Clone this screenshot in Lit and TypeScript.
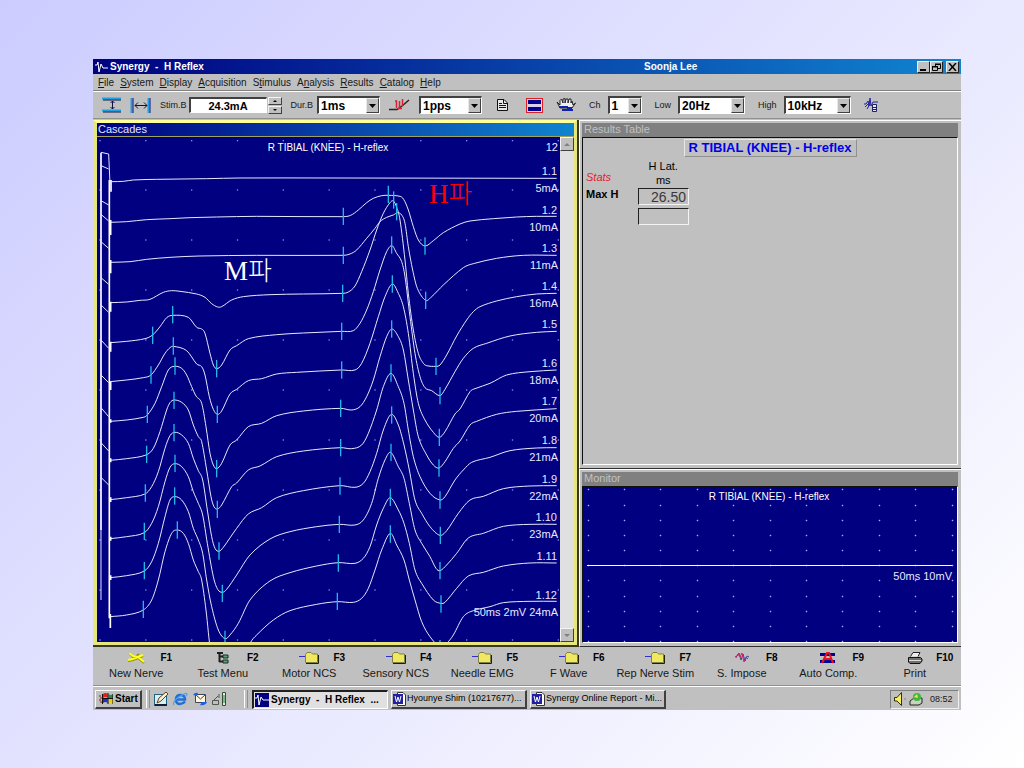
import { LitElement, html, svg, css } from "lit";
import { customElement, property } from "lit/decorators.js";
import { classMap } from "lit/directives/class-map.js";

type Pt = [number, number];

interface Trace {
  name: string;
  current: string;
  base: number;
  points: number[];
  cursors: number[];
}

/* Sample units are thirds of a pixel. */
const TRACES: Trace[] = [
  { name: "1.1", current: "5mA", base: 175, cursors: [],
    points: [65,185,100,184,130,180,200,178,350,176,450,174,720,174,1400,175] },
  { name: "1.2", current: "10mA", base: 290, cursors: [760,289,895,223,1005,378],
    points: [60,307,110,305,170,299,240,296,300,293,380,291,500,289,760,290,782,286,805,270,830,248,850,235,875,227,895,226,930,229,941,238,955,270,970,320,985,360,1005,378,1030,362,1060,338,1110,312,1140,303,1210,296,1280,291,1340,289,1400,289] },
  { name: "1.3", current: "11mA", base: 406, cursors: [760,406,920,275,1007,541],
    points: [60,427,120,425,170,418,240,412,330,408,500,406,760,406,780,402,800,390,830,355,855,325,870,305,890,292,910,285,923,278,935,285,945,310,955,380,968,450,982,505,1007,541,1025,530,1060,495,1120,443,1150,431,1220,415,1300,406,1400,406] },
  { name: "1.4", current: "16mA", base: 520, cursors: [758,520,911,240,1038,739],
    points: [60,548,110,546,150,541,180,538,220,517,245,512,270,514,320,522,345,532,365,551,383,561,395,560,425,540,460,530,540,524,640,522,758,520,775,516,795,498,815,455,840,390,860,330,880,280,900,248,910,243,920,262,930,300,945,420,955,520,970,630,985,700,1000,730,1010,737,1038,739,1050,735,1070,705,1100,648,1130,600,1150,575,1170,560,1220,543,1280,530,1340,522,1400,520] },
  { name: "1.5", current: "", base: 634, cursors: [188,646,248,584,380,746,755,634,905,375,1050,827],
    points: [60,668,110,664,165,656,188,645,210,620,230,593,248,586,295,592,320,622,335,627,345,640,360,700,370,735,380,746,395,735,420,690,440,677,475,656,560,644,640,639,755,634,790,632,810,610,830,570,850,515,870,450,890,395,906,377,920,400,935,425,945,470,960,590,975,700,990,770,1005,803,1025,812,1050,827,1065,808,1095,755,1120,715,1150,685,1190,670,1260,648,1340,637,1400,634] },
  { name: "1.6", current: "18mA", base: 750, cursors: [183,765,250,678,382,883,755,750,907,492,1048,952],
    points: [60,785,110,780,160,773,183,765,205,735,225,700,240,683,250,679,290,692,320,732,335,740,345,765,358,830,370,868,382,883,395,873,420,822,440,808,475,782,515,776,560,762,620,757,755,750,795,750,815,730,840,670,865,590,885,530,907,492,925,520,940,560,955,640,970,760,985,850,1005,900,1030,937,1048,952,1065,935,1095,882,1110,867,1140,815,1155,806,1200,790,1250,765,1320,755,1400,750] },
  { name: "1.7", current: "20mA", base: 865, cursors: [172,883,255,738,380,1046,752,865,905,627,1047,1044],
    points: [60,904,110,900,160,892,172,885,195,850,215,800,235,750,253,739,275,745,290,765,305,800,318,828,335,850,348,920,360,1000,370,1035,380,1046,395,1030,420,975,440,960,475,920,515,910,560,887,640,873,752,865,785,870,810,860,830,830,850,780,870,710,890,650,906,627,925,650,940,690,955,780,970,870,985,950,1010,1005,1030,1035,1047,1044,1065,1025,1090,985,1110,963,1140,915,1160,904,1220,883,1280,874,1400,866] },
  { name: "1.8", current: "21mA", base: 982, cursors: [170,1003,252,841,382,1168,752,983,903,759,1050,1140],
    points: [60,1021,110,1016,168,1005,190,985,210,935,230,870,240,848,252,840,275,847,295,870,310,915,325,950,335,965,350,1050,363,1130,372,1160,382,1167,395,1155,425,1100,440,1089,475,1050,510,1038,560,1010,640,993,752,983,785,986,815,975,835,940,860,870,880,800,903,760,925,800,942,850,955,930,970,1010,990,1070,1020,1120,1050,1140,1065,1130,1095,1080,1120,1050,1145,1027,1200,1012,1260,992,1340,984,1400,983] },
  { name: "1.9", current: "22mA", base: 1097, cursors: [166,1119,252,938,387,1293,750,1098,905,885,1051,1246],
    points: [60,1139,110,1133,165,1122,185,1100,205,1055,225,985,240,947,255,937,275,945,295,970,310,1015,325,1052,338,1080,352,1170,365,1250,375,1285,387,1294,400,1282,440,1225,475,1182,515,1163,560,1133,640,1112,750,1097,795,1102,820,1090,840,1055,860,1000,880,930,904,883,925,915,942,975,958,1050,975,1140,995,1180,1020,1220,1050,1246,1070,1232,1105,1180,1140,1140,1180,1129,1240,1106,1320,1098,1400,1097] },
  { name: "1.10", current: "23mA", base: 1213, cursors: [163,1234,255,1030,397,1420,748,1213,903,997,1050,1352],
    points: [60,1256,110,1250,163,1238,185,1210,205,1160,225,1085,240,1042,255,1031,275,1040,295,1070,310,1115,325,1150,338,1185,352,1270,370,1370,383,1408,397,1417,410,1408,440,1365,480,1305,540,1257,600,1235,680,1220,748,1213,795,1215,820,1200,845,1150,865,1075,885,1020,902,997,925,1040,942,1075,958,1150,975,1230,995,1270,1020,1310,1038,1345,1050,1352,1070,1335,1100,1300,1135,1254,1180,1240,1240,1219,1320,1213,1400,1213] },
  { name: "1.11", current: "", base: 1329, cursors: [163,1352,254,1128,405,1558,745,1329,901,1132,1053,1452],
    points: [60,1373,110,1367,163,1353,185,1325,205,1270,225,1190,240,1140,255,1130,275,1140,295,1175,310,1225,325,1260,338,1300,350,1380,365,1460,385,1530,405,1556,420,1545,445,1510,480,1440,540,1383,600,1358,680,1338,745,1328,795,1330,820,1315,840,1280,860,1215,880,1165,901,1133,925,1170,942,1210,958,1270,975,1350,995,1390,1030,1440,1053,1450,1065,1447,1100,1405,1135,1368,1180,1357,1240,1338,1320,1329,1400,1329] },
  { name: "1.12", current: "50ms 2mV 24mA", base: 1445, cursors: [160,1468,262,1230,742,1444,901,1242,1050,1586],
    points: [60,1490,110,1485,160,1470,185,1440,205,1380,225,1295,245,1240,262,1230,280,1240,295,1270,310,1320,325,1355,335,1380,348,1470,362,1590,400,1680,440,1660,480,1570,500,1545,550,1500,600,1472,680,1453,742,1445,790,1447,815,1435,835,1405,855,1350,875,1290,901,1240,920,1275,942,1320,958,1380,975,1440,995,1505,1020,1550,1050,1580,1070,1570,1090,1545,1120,1490,1150,1472,1200,1460,1240,1448,1320,1444,1400,1444] },
];

/* Stimulus artefact strokes joining the two vertical edges. */
const ARTEFACTS: number[] = [97,102,137,147,242,255,283,303,365,385,473,493,555,577,660,685,765,788,863,890,968,993,1072,1095];

function smooth(flat: number[]): string {
  const p: Pt[] = pairs(flat);
  let d = `M${p[0][0]} ${p[0][1]}`;
  for (let i = 0; i < p.length - 1; i++) {
    const a = p[i], b = p[i + 1];
    const prev = p[i - 1] ?? a, next = p[i + 2] ?? b;
    const dx = (b[0] - a[0]) / 3;
    const slope = (q: Pt, r: Pt) => (r[1] - q[1]) / (r[0] - q[0] || 1);
    const s1 = slope(prev, b), s2 = slope(a, next);
    d += `C${(a[0] + dx).toFixed(1)} ${(a[1] + s1 * dx).toFixed(1)} ${(b[0] - dx).toFixed(1)} ${(b[1] - s2 * dx).toFixed(1)} ${b[0]} ${b[1]}`;
  }
  return d;
}

function pairs(flat: number[]): Pt[] {
  const out: Pt[] = [];
  for (let i = 0; i < flat.length; i += 2) out.push([flat[i], flat[i + 1]]);
  return out;
}

const range = (n: number) => Array.from({ length: n }, (_, i) => i);

const base = css`
  * { box-sizing: border-box; }
  button { font: inherit; color: inherit; margin: 0; padding: 0; border: 0; background: none; }
  svg { display: block; }
`;

@customElement("cascade-chart")
class CascadeChart extends LitElement {
  static styles = [base, css`
    :host { display: block; min-width: 0; min-height: 0; background: #000080; overflow: hidden; }
    .chart { width: 100%; height: 100%; }
    .trace { fill: none; stroke: #e8e8ff; stroke-width: 3; }
    .edge { fill: none; stroke: #fff; stroke-width: 5; }
    .cursor { stroke: #20b8e8; stroke-width: 4; }
    .dot { fill: #8888f0; }
    .label { font: 11px "Liberation Sans", sans-serif; fill: #e8e8ff; text-anchor: end; }
    .heading { font: 10px "Liberation Sans", sans-serif; fill: #fff; text-anchor: middle; }
    .note { font: 27px "Liberation Serif", "Noto Sans CJK KR", serif; fill: #fff; }
    .hangul { font: 300 26px "Noto Sans CJK KR", sans-serif; }
    .red { fill: #ff0000; }
  `];

  render() {
    return html`<svg class="chart" viewBox="97 137 463 505" role="img" aria-label="H reflex cascade">
      <g transform="translate(90 120) scale(0.33333)">
        ${range(11).map((c) => range(11).map((r) => svg`<rect class="dot" x=${28 + c * 137.5} y=${r === 0 ? 60 : 58 + r * 150} width="4" height="4"/>`))}
        ${TRACES.map((t) => svg`<path class="trace" d=${smooth(t.points)}/>`)}
        <path class="edge" d="M33 98V1230M58 180V1495"/>
        <path class="trace" d="M33 1230V1440M56 102L60 190"/>
        <path class="edge" d="M63 180V215M62 300v45M62 420v40M62 545v30M62 665v30M62 785v25M62 898v10M62 1015v12M62 1132v14M62 1250v12M62 1366v14M61 1482v42"/>
        ${pairs(ARTEFACTS).map(([a, b]) => svg`<path class="trace" d="M33 ${a}L56 ${b}"/>`)}
        ${TRACES.map((t) => pairs(t.cursors).map(([x, y]) => svg`<path class="cursor" d="M${x} ${y - 26}V${y + 26}"/>`))}
      </g>
      <text class="heading" x="328" y="151">R TIBIAL (KNEE) - H-reflex</text>
      <text class="label" x="558" y="151">12</text>
      ${TRACES.map((t) => {
        const y = Math.round(120 + t.base / 3);
        return svg`<text class="label" x="557" y=${y - 3}>${t.name}</text>
          <text class="label" x="558" y=${y + 14}>${t.current}</text>`;
      })}
      <text class="note" x="224" y="280">M<tspan class="hangul">파</tspan></text>
      <text class="note red" x="429" y="203">H<tspan class="hangul">파</tspan></text>
    </svg>`;
  }
}

@customElement("monitor-chart")
class MonitorChart extends LitElement {
  static styles = [base, css`
    :host { display: block; min-width: 0; min-height: 0; background: #000080; overflow: hidden; }
    .chart { width: 100%; height: 100%; }
    .dot { fill: #a8a8ff; }
    .halo { fill: #2828a0; }
    .line { stroke: #fff; stroke-width: 1; }
    .label { font: 11px "Liberation Sans", sans-serif; fill: #e8e8ff; text-anchor: end; }
    .heading { font: 10px "Liberation Sans", sans-serif; fill: #fff; text-anchor: middle; }
  `];

  render() {
    return html`<svg class="chart" viewBox="583 487 374 155" role="img" aria-label="Monitor">
      ${range(11).map((c) => range(11).map((r) => {
        const x = Math.round(587.5 + c * 36.4), y = Math.round(489.4 + r * 15.16);
        return svg`<path class="halo" d="M${x - 1} ${y}h3v1h-3ZM${x} ${y - 1}h1v3h-1Z"/><rect class="dot" x=${x} y=${y} width="1" height="1"/>`;
      }))}
      <path class="line" d="M587 565.5H952"/>
      <text class="heading" x="769" y="500">R TIBIAL (KNEE) - H-reflex</text>
      <text class="label" x="952" y="580">50ms 10mV</text>
    </svg>`;
  }
}

@customElement("drop-field")
class DropField extends LitElement {
  @property() label = "";
  @property() name = "";
  @property() value = "";
  @property() size = "m";

  static styles = [base, css`
    :host { display: block; }
    .field { display: flex; align-items: center; gap: 7px; }
    .tight { gap: 4px; }
    .box { display: grid; align-items: center; height: 18px; background: #fff; border: 1px solid #fff; border-top: 2px solid #404040; border-left: 2px solid #404040; }
    .s { width: 34px; }
    .m { width: 63px; }
    .l { width: 67px; }
    select { grid-area: 1 / 1; width: 100%; height: 15px; appearance: none; border: 0; margin: 0; padding: 0 0 0 2px; background: none; font: bold 12px "Liberation Sans", sans-serif; color: #000; border-radius: 0; outline: 0; }
    .arrow { grid-area: 1 / 1; justify-self: end; display: grid; place-items: center; width: 13px; height: 15px; background: #c0c0c0; border: 1px solid #e8e8e8; border-right-color: #404040; border-bottom-color: #404040; pointer-events: none; }
  `];

  render() {
    return html`<div class=${classMap({ field: true, tight: this.label === "Dur.B" })}>
      ${this.label ? html`<label for="pick">${this.label}</label>` : ""}
      <span class="box ${this.size}">
        <select id="pick" aria-label=${this.label || this.name}><option>${this.value}</option></select>
        <span class="arrow"><svg width="7" height="4"><path d="M0 0H7L3.500 4Z"/></svg></span>
      </span>
    </div>`;
  }
}

const folder = svg`<path d="M0 5.500H6" stroke="#3030d0"/><path d="M6.500 11.500V3.500L8 1.500H12L13.500 3H18.500V11.500Z" fill="#f0e860" stroke="#808040"/><path d="M7 12.500H19.500V4" fill="none" stroke="#202000"/>`;

const FUNCTIONS = [
  { key: "F1", text: "New Nerve", icon: svg`<path d="M3 2L7 6L12 7L18 12M2 10L7 9L12 7L17 5M9 6L13 3" fill="none" stroke="#909000" stroke-width="2"/><path d="M3 2L7 5L12 6L18 11M2 9L7 8L12 6L17 4" fill="none" stroke="#ffff20" stroke-width="2"/>` },
  { key: "F2", text: "Test Menu", icon: svg`<path d="M4 2H10M6.500 3V11M6 5.500H10M6 10.500H10" fill="none" stroke="#202020" stroke-width="2"/><path d="M10 4H15V7H10ZM10 9H15V12H10Z" fill="#60a080" stroke="#103020"/>` },
  { key: "F3", text: "Motor NCS", icon: folder },
  { key: "F4", text: "Sensory NCS", icon: folder },
  { key: "F5", text: "Needle EMG", icon: folder },
  { key: "F6", text: "F Wave", icon: folder },
  { key: "F7", text: "Rep Nerve Stim", icon: folder },
  { key: "F8", text: "S. Impose", icon: svg`<path d="M3 6L5 5L7 2L9 9L11 3L13 10L15 5L17 6" fill="none" stroke="#4040a0"/><path d="M4 7L6 3L8 6L10 2L12 11L14 6L16 8" fill="none" stroke="#d02060"/>` },
  { key: "F9", text: "Auto Comp.", icon: svg`<path d="M2 2H17V5H2ZM2 9H17V12H2Z" fill="#000090"/><path d="M4 12L9 2H11L15 12M6 8H14" fill="none" stroke="#e81020" stroke-width="2"/>` },
  { key: "F10", text: "Print", icon: svg`<path d="M5.500 5.500L8 1.500H15L13 5.500" fill="#eee" stroke="#222"/><path d="M3.500 6.500H15.500L17 8V10L15 12.500H5L3.500 11Z" fill="#707070" stroke="#111"/><path d="M4 9.500H16" stroke="#ddd"/>` },
];

const MENUS: [string, string, string][] = [
  ["", "F", "ile"], ["", "S", "ystem"], ["", "D", "isplay"], ["", "A", "cquisition"],
  ["S", "t", "imulus"], ["A", "n", "alysis"], ["", "R", "esults"], ["", "C", "atalog"], ["", "H", "elp"],
];

const word = svg`<path d="M4.500 .500H10L12.500 3V13.500H4.500Z" fill="#fff" stroke="#333"/><rect x="0" y="2" width="10" height="10" fill="#2020a0"/><path d="M2 4L3.500 10L5 5L6.500 10L8 4" fill="none" stroke="#fff"/>`;

@customElement("app-root")
class AppRoot extends LitElement {
  static styles = [base, css`
    :host {
      display: flex; min-height: 100vh; box-sizing: border-box; padding: 59px 63px 58px 93px;
      background: linear-gradient(135deg, #ccccff, #ffffff);
      font: 10px/13px "Liberation Sans", sans-serif; color: #181818;
    }
    .window { flex: 1; min-width: 0; display: grid; grid-template-rows: 15px 17px 28px minmax(0, 1fr) 39px 24px; background: #c0c0c0; }

    .titlebar { display: grid; grid-template-columns: 549px 1fr auto; align-items: center; padding: 0 2px; background: linear-gradient(90deg, #000080, #1084d0); color: #fff; font: bold 10px/14px "Liberation Sans", sans-serif; }
    .caption { display: flex; align-items: center; gap: 2px; white-space: pre; }
    .controls { display: flex; }
    .control { display: grid; place-items: center; width: 13px; height: 12px; background: #c0c0c0; border: 1px solid #f0f0f0; border-right-color: #202020; border-bottom-color: #202020; }
    .close { margin-left: 3px; }

    .menu { display: flex; align-items: center; gap: 6px; padding: 0 5px; border-bottom: 1px solid #808080; }
    .menu u { text-underline-offset: 1px; }

    .toolbar { display: flex; align-items: center; gap: 9px; padding: 0 9px; border-top: 1px solid #fff; border-bottom: 1px solid #909090; font-size: 9px; }
    .more { display: flex; align-items: center; gap: 13px; margin-left: 6px; }
    .stim { display: flex; align-items: center; gap: 2px; }
    .amount { display: flex; align-items: center; gap: 1px; }
    .amount input { width: 78px; height: 16px; margin: 0; padding: 0; border: 1px solid #fff; border-top: 2px solid #404040; border-left: 2px solid #404040; border-radius: 0; background: #fff; text-align: center; font: bold 11px "Liberation Sans", sans-serif; color: #000; }
    .spin { display: grid; gap: 1px; }
    .spin button, .scroll button { display: grid; place-items: center; background: #c0c0c0; border: 1px solid #f4f4f4; border-right-color: #404040; border-bottom-color: #404040; }
    .spin button { width: 14px; height: 8px; }

    .workspace { display: grid; grid-template-columns: minmax(0, 486fr) minmax(0, 382fr); min-height: 0; padding-top: 1px; }
    .cascade { display: grid; padding: 0 2px 2px 0; background: #383820; min-height: 0; }
    .frame { display: grid; grid-template-rows: 14px minmax(0, 1fr); min-height: 0; border: 3px solid #e6e67c; border-left-width: 4px; border-top-color: #ffff99; }
    .heading { margin: 0; padding-left: 1px; font: 11px/12px "Liberation Sans", sans-serif; white-space: nowrap; }
    .active { background: linear-gradient(90deg, #000080, #1084d0); color: #e0e8ff; border-bottom: 1px solid #a0a060; }
    .plot { display: grid; grid-template-columns: minmax(0, 1fr) 14px; min-height: 0; }
    .scroll { display: flex; flex-direction: column; justify-content: space-between; background: #e0e0e0; }
    .scroll button { height: 14px; }

    .side { display: grid; grid-template-rows: minmax(0, 349fr) minmax(0, 178fr); min-height: 0; }
    .pane { display: grid; grid-template-rows: 14px minmax(0, 1fr); min-height: 0; padding: 2px 3px 3px 2px; border-top: 1px solid #fff; border-left: 1px solid #fff; border-bottom: 1px solid #303030; }
    .idle { background: #808080; color: #c0c0c0; padding-left: 2px; }
    .content { display: grid; min-height: 0; border: 1px solid #fff; border-top-color: #101010; border-left-color: #101010; }
    .results { align-content: start; padding: 1px 3px; }
    .study { justify-self: center; margin: 0; padding: 0 4px; font: bold 13px/16px "Liberation Sans", sans-serif; color: #0000e8; border: 1px solid #e8e8e8; border-right-color: #909090; border-bottom-color: #909090; }
    table { border-spacing: 0; width: 103px; margin-top: 2px; font: 11px/14px "Liberation Sans", sans-serif; color: #000; table-layout: fixed; }
    th, td { padding: 0; font-weight: normal; }
    tbody th { text-align: left; font-weight: bold; vertical-align: top; }
    .stats { padding-bottom: 3px; text-align: left; font-style: italic; color: #e02030; vertical-align: bottom; }
    .value { display: block; height: 17px; margin: 1px 0 2px; padding-right: 2px; border: 1px solid #f4f4f4; border-top-color: #202020; border-left-color: #202020; text-align: right; font-size: 14px; line-height: 16px; color: #383838; }

    .functions { display: grid; grid-template-columns: repeat(10, minmax(0, 1fr)); padding: 4px 3px 0 0; border-bottom: 1px solid #909090; }
    .function { display: grid; grid-template-columns: 1fr 20px 1fr; justify-items: center; align-content: start; row-gap: 1px; font: 11px/14px "Liberation Sans", sans-serif; }
    .function svg { grid-column: 2; }
    .key { justify-self: start; width: 24px; margin-left: 8px; text-align: center; font-size: 10px; font-weight: bold; color: #000; }
    .name { grid-column: 1 / -1; white-space: nowrap; }

    .taskbar { display: flex; align-items: center; padding: 1px 2px 0; border-top: 1px solid #fff; }
    .start { display: flex; align-items: center; gap: 2px; width: 47px; height: 19px; padding-left: 3px; font: bold 10px/14px "Liberation Sans", sans-serif; color: #000; }
    .start, .task { background: #c0c0c0; border: 1px solid #f8f8f8; border-right: 2px solid #404040; border-bottom: 2px solid #404040; }
    .grip { width: 4px; height: 18px; margin: 0 4px; border-left: 1px solid #fff; border-right: 1px solid #909090; }
    .quick { display: flex; gap: 5px; margin-right: 14px; }
    .tasks { display: flex; gap: 3px; }
    .task { display: flex; align-items: center; gap: 1px; width: 136px; height: 19px; padding-left: 1px; white-space: pre; font-size: 9px; color: #000; }
    .pressed { background: #e0e0e0; border: 1px solid #fff; border-top: 2px solid #202020; border-left: 2px solid #202020; gap: 2px; font: bold 10px/14px "Liberation Sans", sans-serif; }
    .tray { display: flex; align-items: center; gap: 3px; margin-left: auto; width: 69px; height: 19px; padding-left: 3px; border: 1px solid #f0f0f0; border-top-color: #808080; border-left-color: #808080; }
    .clock { padding-left: 4px; font-size: 9px; }
  `];

  render() {
    return html`<main class="window">
      <header class="titlebar">
        <span class="caption"><svg width="13" height="12"><path d="M0 4L2 4L3 1L4 11L6 3L8 7H13" fill="none" stroke="#fff"/></svg>Synergy  -  H Reflex</span>
        <span>Soonja Lee</span>
        <span class="controls">
          <button class="control" aria-label="Minimize"><svg width="9" height="8"><path d="M1 6H7V8H1Z"/></svg></button>
          <button class="control" aria-label="Restore"><svg width="9" height="8"><path d="M3 1.500H8.500V5.500H6M3.500 1V3" fill="none" stroke="#000"/><path d="M.500 4H5.500V7.500H.500Z" fill="none" stroke="#000"/><path d="M3 1H9M0 3.500H6" stroke="#000"/></svg></button>
          <button class="control close" aria-label="Close"><svg width="9" height="8"><path d="M1 0L8 8M8 0L1 8" stroke="#000" stroke-width="1.500"/></svg></button>
        </span>
      </header>

      <nav class="menu">${MENUS.map(([a, b, c]) => html`<button>${a}<u>${b}</u>${c}</button>`)}</nav>

      <section class="toolbar" aria-label="Tools">
        <button aria-label="Vertical scale"><svg width="19" height="16"><path d="M0 1.500H19M0 13.500H19" stroke="#20a0e0" stroke-width="2"/><path d="M1 3H19M1 15H19" stroke="#101040"/><path d="M10.500 4V12M8.500 6L10.500 4L12.500 6M8.500 10L10.500 12L12.500 10" fill="none" stroke="#101040"/></svg></button>
        <button aria-label="Horizontal scale"><svg width="21" height="16"><path d="M1.500 1V16M18.500 1V16" stroke="#20a0e0" stroke-width="2"/><path d="M3 1V16M20 1V16" stroke="#101080"/><path d="M5 8.500H17M8 5.500L5 8.500L8 11.500M14 5.500L17 8.500L14 11.500" fill="none" stroke="#101040"/></svg></button>
        <div class="stim">
          <label for="stim">Stim.B</label>
          <span class="amount">
            <input id="stim" value="24.3mA">
            <span class="spin">
              <button aria-label="Increase"><svg width="4" height="2"><path d="M0 2L2 0L4 2Z"/></svg></button>
              <button aria-label="Decrease"><svg width="4" height="2"><path d="M0 0L2 2L4 0Z"/></svg></button>
            </span>
          </span>
        </div>
        <drop-field label="Dur.B" value="1ms"></drop-field>
        <button aria-label="Stimulate"><svg width="21" height="14"><path d="M0 11.500H8L13 8L20 2" fill="none" stroke="#302020" stroke-width="1.500"/><path d="M6 3H7.500V10M10.500 3V11M13.500 1V8M9 10.500H13" fill="none" stroke="#d82030" stroke-width="1.500"/></svg></button>
        <drop-field name="Rate" value="1pps"></drop-field>
        <div class="more">
          <button aria-label="Report"><svg width="16" height="12"><path d="M.500 .500H7L10.500 4V11.500H.500Z" fill="#e8e8e8" stroke="#111"/><path d="M6.500 1V4.500H10M2 4.500H5M2 6.500H9M2 8.500H9" fill="none" stroke="#111"/></svg></button>
          <button aria-label="Display mode"><svg width="17" height="15"><rect x=".500" y=".500" width="16" height="14" fill="#d8d0e8" stroke="#e02020"/><path d="M2 2H15V6H2ZM2 9H15V13H2Z" fill="#000090"/></svg></button>
          <button aria-label="Hands"><svg width="20" height="15"><path d="M1 4L4 7V2.500L5.500 1L7 5V1L9 .500V5L10 1H12V5L13 1H15V5L16 3L17 7L19.500 5L16 10H4Z" fill="#eee" stroke="#222"/><path d="M3 8H12V10H3ZM6 11H17V13H6ZM11 9H16V11H11Z" fill="#1020b0"/></svg></button>
          <drop-field label="Ch" value="1" size="s"></drop-field>
          <drop-field label="Low" value="20Hz" size="l"></drop-field>
          <drop-field label="High" value="10kHz" size="l"></drop-field>
          <button aria-label="Waveform notes"><svg width="14" height="14"><path d="M0 6H2L4 3L5 8L6 0L7 8L9 4H14M1 9L5 5M3 11L6 6" fill="none" stroke="#2020a0"/><path d="M8.500 6.500H12.500V13.500H8.500ZM9 9.500H12M9 11.500H12" fill="#e8e8ff" stroke="#202060"/></svg></button>
        </div>
      </section>

      <section class="workspace">
        <article class="cascade"><div class="frame">
          <h2 class="heading active">Cascades</h2>
          <div class="plot">
            <cascade-chart></cascade-chart>
            <div class="scroll">
              <button aria-label="Scroll up"><svg width="6" height="3"><path d="M0 3L3 0L6 3Z" fill="#808080"/></svg></button>
              <button aria-label="Scroll down"><svg width="6" height="3"><path d="M0 0L3 3L6 0Z" fill="#808080"/></svg></button>
            </div>
          </div>
        </div></article>
        <div class="side">
          <article class="pane">
            <h2 class="heading idle">Results Table</h2>
            <div class="content results">
              <h3 class="study">R TIBIAL (KNEE) - H-reflex</h3>
              <table>
                <thead><tr><th class="stats" scope="col">Stats</th><th scope="col">H Lat.<br>ms</th></tr></thead>
                <tbody>
                  <tr><th scope="row">Max H</th><td><span class="value">26.50</span></td></tr>
                  <tr><td></td><td><span class="value"></span></td></tr>
                </tbody>
              </table>
            </div>
          </article>
          <article class="pane">
            <h2 class="heading idle">Monitor</h2>
            <div class="content"><monitor-chart></monitor-chart></div>
          </article>
        </div>
      </section>

      <nav class="functions">
        ${FUNCTIONS.map((f) => html`<button class="function">
          <svg width="20" height="14">${f.icon}</svg><span class="key">${f.key}</span><span class="name">${f.text}</span>
        </button>`)}
      </nav>

      <footer class="taskbar">
        <button class="start"><svg width="14" height="13"><path d="M4 2Q6.500 0 8.500 2V6Q6.500 4 4 6Z" fill="#e02020"/><path d="M9.500 2Q11.500 4 14 2V6Q11.500 8 9.500 6Z" fill="#209040"/><path d="M4 7Q6.500 5 8.500 7V11Q6.500 9 4 11Z" fill="#2030c0"/><path d="M9.500 7Q11.500 9 14 7V11Q11.500 13 9.500 11Z" fill="#e8d020"/><path d="M3.500 2V12M9 1V12M4 6.500H14M14 2V12" fill="none" stroke="#111"/><path d="M0 4H2M1 6H3M0 8H2M1 10H3" stroke="#802020"/></svg>Start</button>
        <span class="grip"></span>
        <div class="quick">
          <button aria-label="Show desktop"><svg width="14" height="14"><rect x=".500" y="2.500" width="12" height="11" fill="#d8f0f0" stroke="#206080"/><path d="M3 11L5 6L12 0L14 2L7 9Z" fill="#f8f0d0" stroke="#604020"/><path d="M1 13H13" stroke="#102040" stroke-width="2"/></svg></button>
          <button aria-label="Browser"><svg width="15" height="14"><path d="M12 9.500Q10 12 7 12Q3 12 3 7.500Q3 3 7.500 3Q12 3 12 7.500H4" fill="none" stroke="#2070d8" stroke-width="2.500"/><path d="M1 13Q-1 10 6 5Q13 0 14 2Q14.500 3 12 5" fill="none" stroke="#50a0f0" stroke-width="1.200"/></svg></button>
          <button aria-label="Mail"><svg width="14" height="14"><path d="M2.500 2.500H12.500V10.500H2.500Z" fill="#fff8d8" stroke="#404060"/><path d="M3 3L7.500 7L12 3" fill="none" stroke="#404060"/><path d="M0 3Q2 0 5 1L4 4ZM14 10Q12 14 7 13L9 10Z" fill="#2060e0"/></svg></button>
          <button aria-label="Channels"><svg width="14" height="14"><path d="M.500 8.500H6.500V12.500H.500ZM2 8L6 4M7 2V6" fill="none" stroke="#505850"/><path d="M10.500 .500H13.500V13.500H10.500Z" fill="#e0f0e0" stroke="#305030"/><path d="M12 3V11" stroke="#208040"/></svg></button>
        </div>
        <span class="grip"></span>
        <div class="tasks">
          <button class="task pressed"><svg width="14" height="14"><rect width="14" height="14" fill="#000080"/><path d="M0 5L2 5L3 2L4 12L6 4L8 7H14" fill="none" stroke="#fff"/></svg>Synergy  -  H Reflex  ...</button>
          <button class="task"><svg width="13" height="14">${word}</svg>Hyounye Shim (10217677)...</button>
          <button class="task"><svg width="13" height="14">${word}</svg>Synergy Online Report - Mi...</button>
        </div>
        <div class="tray">
          <svg width="12" height="14"><path d="M.500 5.500H3L7.500 .500V13.500L3 9H.500Z" fill="#f8f060" stroke="#303000"/><path d="M10 7H12" stroke="#808080"/></svg>
          <svg width="14" height="13"><path d="M1 8L5 5H13V10L10 12H1Z" fill="#c8d0c0" stroke="#202820"/><circle cx="8" cy="4" r="4" fill="#40b840"/><path d="M5 4L8 1L9 5Z" fill="#e8e860"/></svg>
          <span class="clock">08:52</span>
        </div>
      </footer>
    </main>`;
  }
}
